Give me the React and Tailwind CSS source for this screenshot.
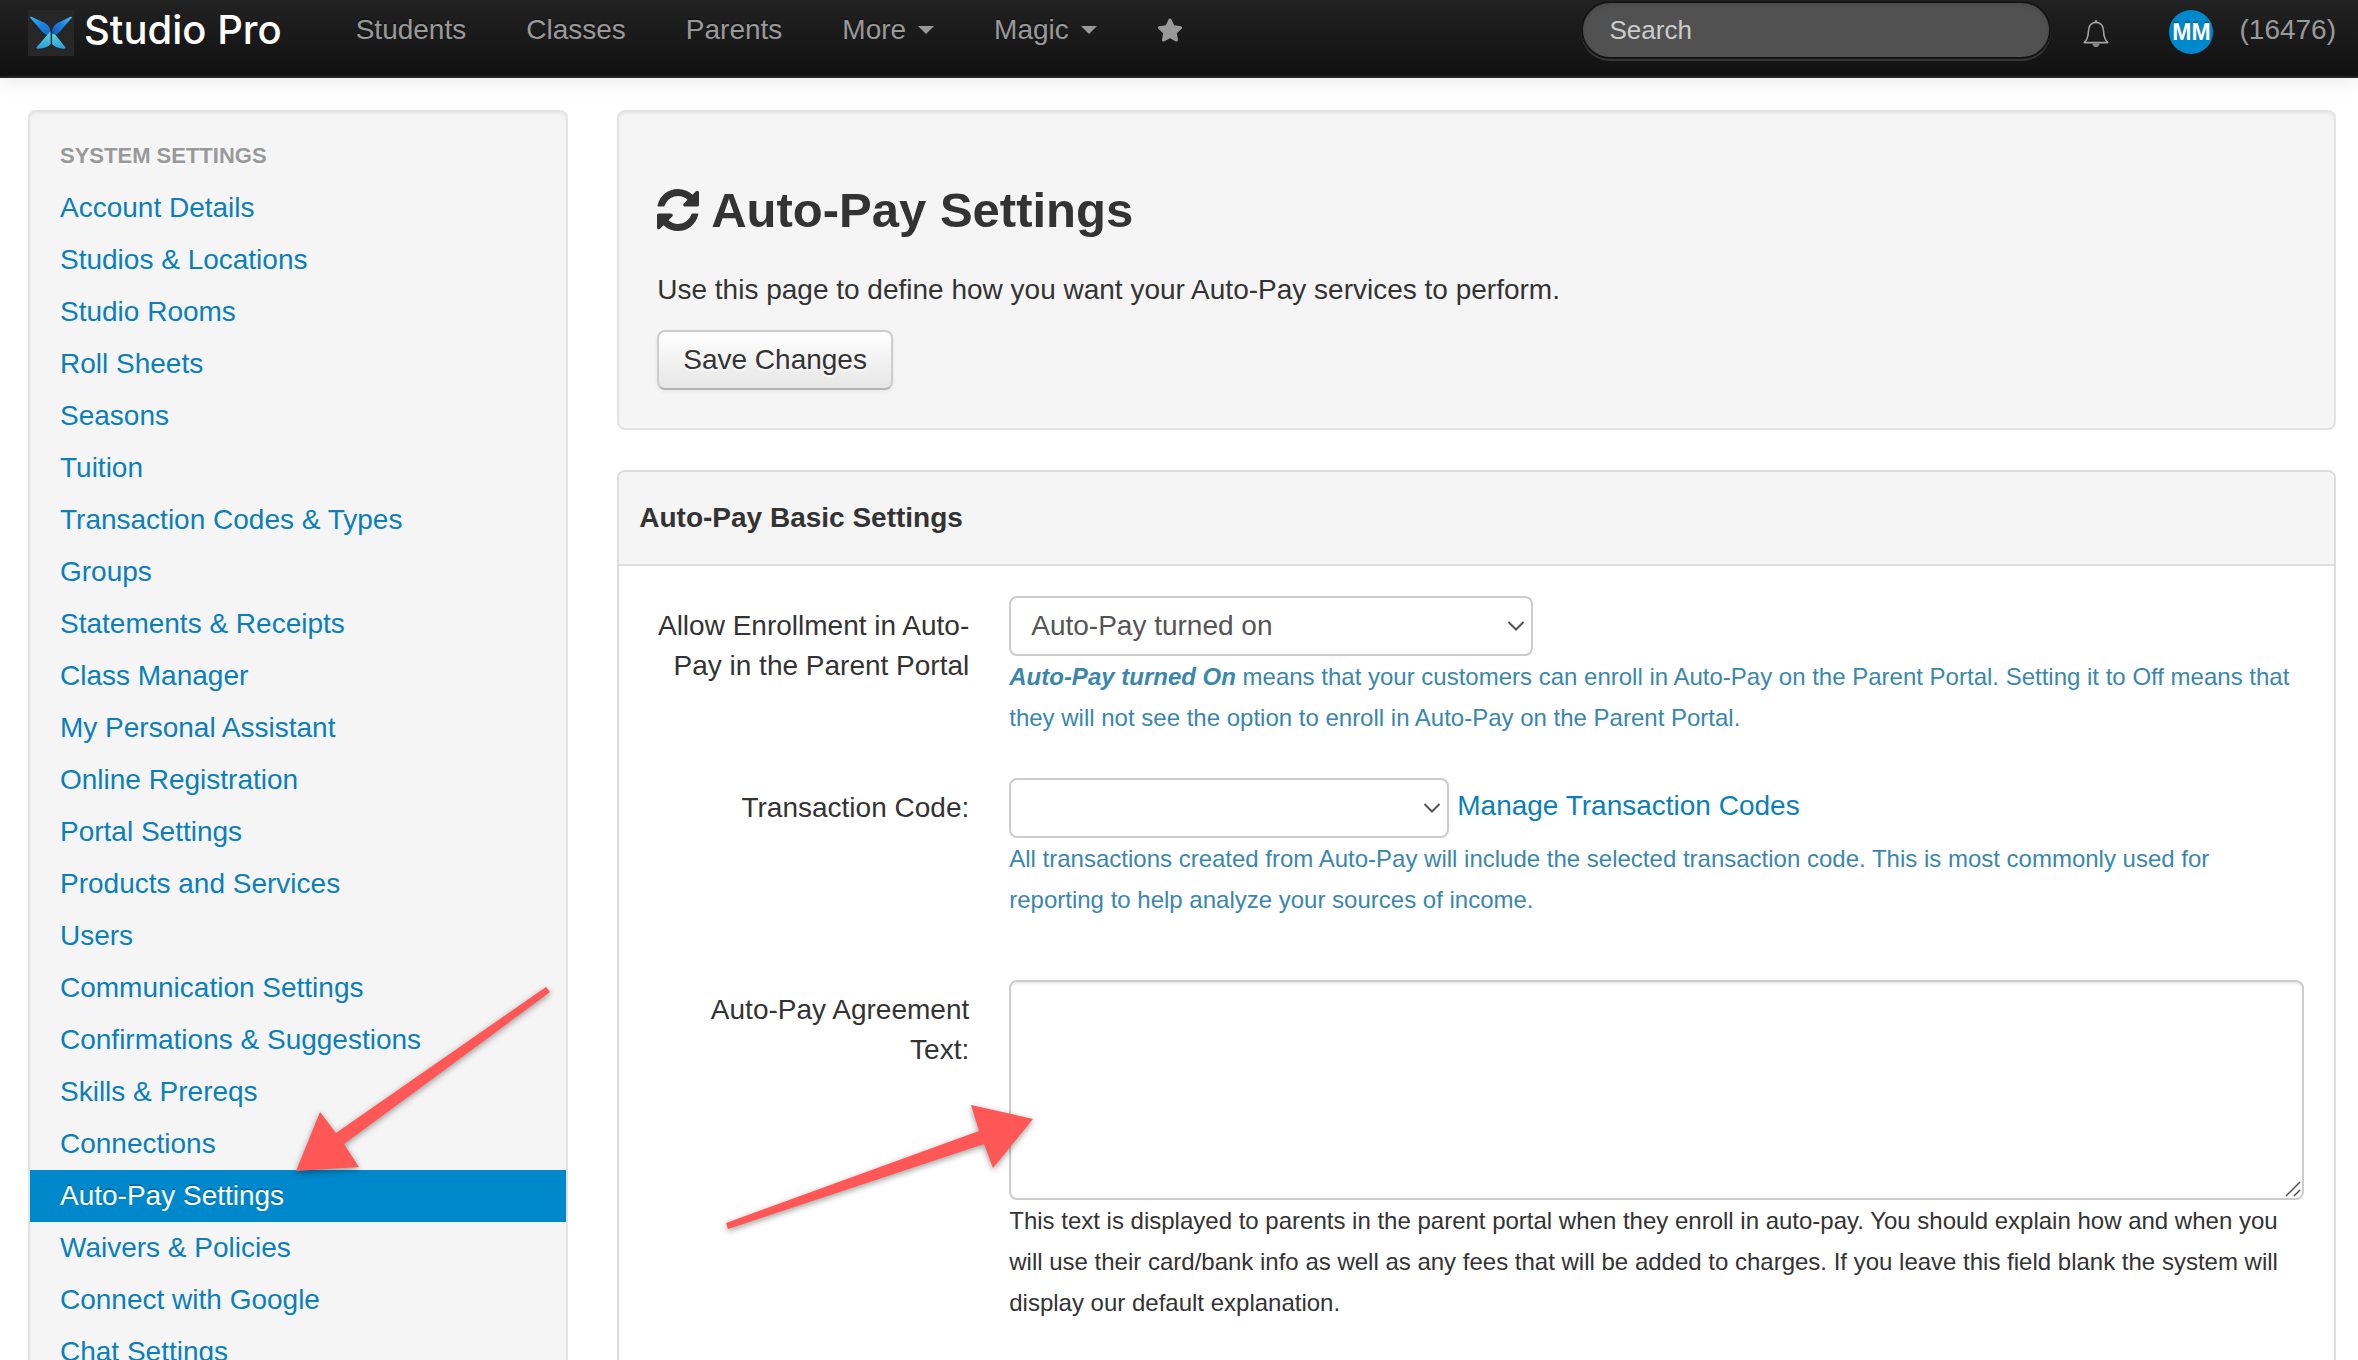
import React, { useState } from "react";
import { FaStar } from "react-icons/fa";

const navLinks = [
  { label: "Students" },
  { label: "Classes" },
  { label: "Parents" },
  { label: "More", dropdown: true },
  { label: "Magic", dropdown: true },
];

const settingsLinks = [
  "Account Details",
  "Studios & Locations",
  "Studio Rooms",
  "Roll Sheets",
  "Seasons",
  "Tuition",
  "Transaction Codes & Types",
  "Groups",
  "Statements & Receipts",
  "Class Manager",
  "My Personal Assistant",
  "Online Registration",
  "Portal Settings",
  "Products and Services",
  "Users",
  "Communication Settings",
  "Confirmations & Suggestions",
  "Skills & Prereqs",
  "Connections",
  "Auto-Pay Settings",
  "Waivers & Policies",
  "Connect with Google",
  "Chat Settings",
];

const Logo = () => (
  <svg viewBox="0 0 46 46" className="size-[46px] shrink-0 bg-[#272727]" aria-hidden="true">
    <defs>
      <linearGradient id="wingLeft" x1="0" y1="0" x2="1" y2="1">
        <stop offset="0" stopColor="#3bb8ea" />
        <stop offset="0.5" stopColor="#1d7fe0" />
        <stop offset="1" stopColor="#1668c4" />
      </linearGradient>
      <linearGradient id="wingRight" x1="1" y1="0" x2="0" y2="1">
        <stop offset="0" stopColor="#45c3ee" />
        <stop offset="0.4" stopColor="#2186e4" />
        <stop offset="1" stopColor="#1250ae" />
      </linearGradient>
      <linearGradient id="wingTail" x1="0" y1="0" x2="0" y2="1">
        <stop offset="0" stopColor="#5ad8e8" />
        <stop offset="1" stopColor="#2a9ed2" />
      </linearGradient>
    </defs>
    <path d="M2 7.6Q1.9 6.4 3.4 6.8L17 13Q22 16 22.6 22L22.6 28L14.500 22Z" fill="url(#wingLeft)" />
    <path d="M44 7.6Q44.1 6.4 42.6 6.8L29.5 13Q24.6 16 24 22L24 28L31.500 22Z" fill="url(#wingRight)" />
    <path d="M22.300 21.500L22.800 34Q19.500 38 10 38.800Q7.500 38.700 9 36.800Z" fill="url(#wingTail)" />
    <path d="M24.200 23.500L24 34Q27 38 36 38.800Q38.500 38.700 37 36.800L27.500 25Z" fill="url(#wingTail)" />
  </svg>
);

const BellIcon = () => (
  <svg viewBox="0 0 26 28" className="w-[26px] h-7" fill="none" stroke="#a3a3a3" strokeWidth="1.6" aria-hidden="true">
    <path d="M13 2.5C8 2.5 5.6 6.5 5.4 11.5C5.2 17 4 20 1.2 22.6H24.8C22 20 20.8 17 20.6 11.5C20.4 6.5 18 2.5 13 2.5Z" strokeLinejoin="round" />
    <path d="M13 0.3V2.5" strokeWidth="2.6" />
    <path d="M9.3 23.4C9.6 28.2 16.4 28.2 16.7 23.4Z" fill="#8a8a8a" stroke="none" />
  </svg>
);

const RefreshIcon = () => (
  <svg viewBox="0 0 1536 1536" className="size-[42px] shrink-0" fill="#333333" aria-hidden="true">
    <path d="M1511 928q0 5-1 7-64 268-268 434.500T764 1536q-146 0-282.500-55T238 1324l-129 129q-19 19-45 19t-45-19-19-45V960q0-26 19-45t45-19h448q26 0 45 19t19 45-19 45l-137 137q71 66 161 102t187 36q134 0 250-65t186-179q11-17 53-117 8-23 30-23h192q13 0 22.500 9.500t9.500 22.500zm25-800v448q0 26-19 45t-45 19h-448q-26 0-45-19t-19-45 19-45l138-138Q969 256 768 256q-134 0-250 65T332 500q-11 17-53 117-8 23-30 23H50q-13 0-22.500-9.500T18 608v-7q65-268 270-434.500T768 0q146 0 284 55.500T1297 212l130-129q19-19 45-19t45 19 19 45z" />
  </svg>
);

const Chevron = () => (
  <svg
    viewBox="0 0 18 11"
    className="pointer-events-none absolute right-2 top-1/2 -translate-y-1/2 w-[18px] h-[11px]"
    fill="none"
    stroke="#555555"
    strokeWidth="2"
    aria-hidden="true"
  >
    <path d="M1.5 1.5L9 9L16.5 1.5" />
  </svg>
);

const Navbar = () => {
  const [search, setSearch] = useState("");

  return (
    <header className="flex h-[78px] items-start border-b-2 border-[#252525] bg-linear-to-b from-[#222222] to-[#111111] pl-7 pr-[22px] shadow-[0_2px_20px_rgba(0,0,0,0.1)]">
      <a href="#home" className="flex h-[60px] items-center gap-[10px]">
        <span className="pt-[6px]">
          <Logo />
        </span>
        <span className="font-['Inter',sans-serif] text-[40px] font-medium text-white">Studio Pro</span>
      </a>
      <nav className="ml-11 flex h-[60px] items-center">
        {navLinks.map((link) => (
          <a
            key={link.label}
            href={`#${link.label.toLowerCase()}`}
            className="flex items-center gap-3 px-[30px] text-[#999999] text-shadow-[0_-2px_0_rgba(0,0,0,0.25)] hover:text-white"
          >
            {link.label}
            {link.dropdown && (
              <span className="border-x-8 border-t-8 border-x-transparent border-t-[#999999]" />
            )}
          </a>
        ))}
        <a href="#favorites" aria-label="Favorites" className="px-[30px] text-[#999999]">
          <FaStar size={26} />
        </a>
      </nav>
      <form className="ml-auto" role="search" onSubmit={(e) => e.preventDefault()}>
        <input
          type="text"
          aria-label="Search"
          placeholder="Search"
          value={search}
          onChange={(e) => setSearch(e.target.value)}
          className="mt-px h-[58px] w-[470px] rounded-full border-2 border-[#151515] bg-[#515151] px-[26px] text-[26px] text-white placeholder:text-[#cccccc] shadow-[inset_0_2px_4px_rgba(0,0,0,0.1),0_2px_0_rgba(255,255,255,0.15)] outline-none"
        />
      </form>
      <button type="button" aria-label="Notifications" className="ml-8 mt-5">
        <BellIcon />
      </button>
      <a href="#account" className="ml-[60px] flex items-center gap-[26px] text-[#999999]">
        <span className="mt-1 flex size-11 items-center justify-center rounded-full bg-[#0088cc] text-[23px] font-bold text-white text-shadow-[0_-2px_0_rgba(0,0,0,0.25)]">
          MM
        </span>
        <span className="leading-[60px]">(16476)</span>
      </a>
    </header>
  );
};

const Sidebar = () => (
  <aside className="rounded-lg border-2 border-[#e3e3e3] bg-[#f5f5f5] py-[18px] shadow-[inset_0_2px_2px_rgba(0,0,0,0.05)]">
    <h2 className="px-[30px] text-[22px] font-bold leading-[52px] text-[#999999] text-shadow-[0_2px_0_rgba(255,255,255,0.5)]">
      SYSTEM SETTINGS
    </h2>
    <ul>
      {settingsLinks.map((label) => {
        const active = label === "Auto-Pay Settings";
        return (
          <li key={label} className="relative">
            <a
              href="#settings"
              aria-current={active ? "page" : undefined}
              className={
                active
                  ? "block bg-[#0088cc] px-[30px] py-[6px] text-white text-shadow-[0_-2px_0_rgba(0,0,0,0.2)]"
                  : "block px-[30px] py-[6px] text-[#0b7fba] hover:bg-[#eeeeee]"
              }
            >
              {label}
            </a>
            {active && (
              <svg
                viewBox="0 0 260 190"
                className="pointer-events-none absolute bottom-[48px] left-[264px] z-10 w-[260px] h-[190px] drop-shadow-[0_2px_3px_rgba(0,0,0,0.4)]"
                aria-hidden="true"
              >
                <path d="M252 3L256 8L50 160L65 183L2 187L26 128L42 149Z" fill="#ff5656" />
              </svg>
            )}
          </li>
        );
      })}
    </ul>
  </aside>
);

const FieldRow = ({ id, label, className, children }) => (
  <div className={`flex gap-10 ${className}`}>
    <label htmlFor={id} className="w-80 shrink-0 pt-[10px] text-right">
      {label}
    </label>
    <div className="min-w-0 flex-1">{children}</div>
  </div>
);

const App = () => {
  const [enrollment, setEnrollment] = useState("on");
  const [code, setCode] = useState("");
  const [agreement, setAgreement] = useState("");

  return (
    <div className="h-screen overflow-hidden bg-white font-['Liberation_Sans',Arial,sans-serif] text-[28px] leading-10 text-[#333333]">
      <Navbar />
      <div className="grid grid-cols-[540fr_1718fr] items-start gap-[49px] pl-7 pr-[22px] pt-8">
        <Sidebar />
        <main>
          <section className="rounded-lg border-2 border-[#e3e3e3] bg-[#f5f5f5] px-[38px] pb-[38px] pt-[58px] shadow-[inset_0_2px_2px_rgba(0,0,0,0.05)]">
            <h1 className="flex items-center gap-3 text-[49px] font-bold leading-20">
              <RefreshIcon />
              Auto-Pay Settings
            </h1>
            <p className="mt-5">
              Use this page to define how you want your Auto-Pay services to perform.
            </p>
            <button
              type="button"
              className="mt-5 block h-[60px] rounded-lg border-2 border-[#cccccc] border-b-[#b3b3b3] bg-linear-to-b from-white to-[#e6e6e6] px-6 text-shadow-[0_2px_2px_rgba(255,255,255,0.75)] shadow-[0_2px_4px_rgba(0,0,0,0.05)]"
            >
              Save Changes
            </button>
          </section>

          <section className="mt-10 rounded-lg border-2 border-[#dddddd] pb-20">
            <h2 className="rounded-t-md border-b-2 border-[#dddddd] bg-[#f5f5f5] px-5 py-[26px] font-bold">
              Auto-Pay Basic Settings
            </h2>
            <form className="px-[30px] pt-[30px]" onSubmit={(e) => e.preventDefault()}>
              <FieldRow id="enrollment" label="Allow Enrollment in Auto-Pay in the Parent Portal" className="">
                <div className="relative w-[524px]">
                  <select
                    id="enrollment"
                    value={enrollment}
                    onChange={(e) => setEnrollment(e.target.value)}
                    className="block h-[60px] w-full appearance-none rounded-lg border-2 border-[#cccccc] bg-white px-5 text-[#555555]"
                  >
                    <option value="on">Auto-Pay turned on</option>
                    <option value="off">Auto-Pay turned off</option>
                  </select>
                  <Chevron />
                </div>
                <p className="text-[24px] leading-[41px] text-[#3a87ad]">
                  <strong className="italic">Auto-Pay turned On</strong> means that your customers can enroll in
                  Auto-Pay on the Parent Portal. Setting it to Off means that they will not see the option to enroll in
                  Auto-Pay on the Parent Portal.
                </p>
              </FieldRow>

              <FieldRow id="code" label="Transaction Code:" className="mt-10">
                <div className="flex items-center gap-2">
                  <div className="relative w-[440px]">
                    <select
                      id="code"
                      value={code}
                      onChange={(e) => setCode(e.target.value)}
                      className="block h-[60px] w-full appearance-none rounded-lg border-2 border-[#cccccc] bg-white px-5 text-[#555555]"
                    >
                      <option value=""></option>
                    </select>
                    <Chevron />
                  </div>
                  <a href="#codes" className="pb-1 text-[#0b7fba] hover:underline">
                    Manage Transaction Codes
                  </a>
                </div>
                <p className="text-[24px] leading-[41px] text-[#3a87ad]">
                  All transactions created from Auto-Pay will include the selected transaction code. This is most
                  commonly used for reporting to help analyze your sources of income.
                </p>
              </FieldRow>

              <FieldRow id="agreement" label="Auto-Pay Agreement Text:" className="mt-15">
                <div className="relative">
                  <textarea
                    id="agreement"
                    value={agreement}
                    onChange={(e) => setAgreement(e.target.value)}
                    className="block h-[220px] w-full resize-none rounded-lg border-2 border-[#cccccc] bg-white px-3 py-2 text-[#555555] shadow-[inset_0_2px_2px_rgba(0,0,0,0.075)] outline-none"
                  />
                  <svg
                    viewBox="0 0 16 16"
                    className="pointer-events-none absolute bottom-[3px] right-[3px] size-4"
                    stroke="#555555"
                    strokeWidth="1.5"
                    aria-hidden="true"
                  >
                    <path d="M1 15L15 1M9 15L15 9" />
                  </svg>
                  <svg
                    viewBox="0 0 320 140"
                    className="pointer-events-none absolute left-[-289px] top-[120px] z-10 w-[320px] h-[140px] drop-shadow-[0_2px_3px_rgba(0,0,0,0.4)]"
                    aria-hidden="true"
                  >
                    <path d="M6 123L8 129L264 44L273 68L313 19L251 5L259 31Z" fill="#ff5656" />
                  </svg>
                </div>
                <p className="text-[24px] leading-[41px]">
                  This text is displayed to parents in the parent portal when they enroll in auto-pay. You should
                  explain how and when you will use their card/bank info as well as any fees that will be added to
                  charges. If you leave this field blank the system will display our default explanation.
                </p>
              </FieldRow>
            </form>
          </section>
        </main>
      </div>
    </div>
  );
};

export default App;
